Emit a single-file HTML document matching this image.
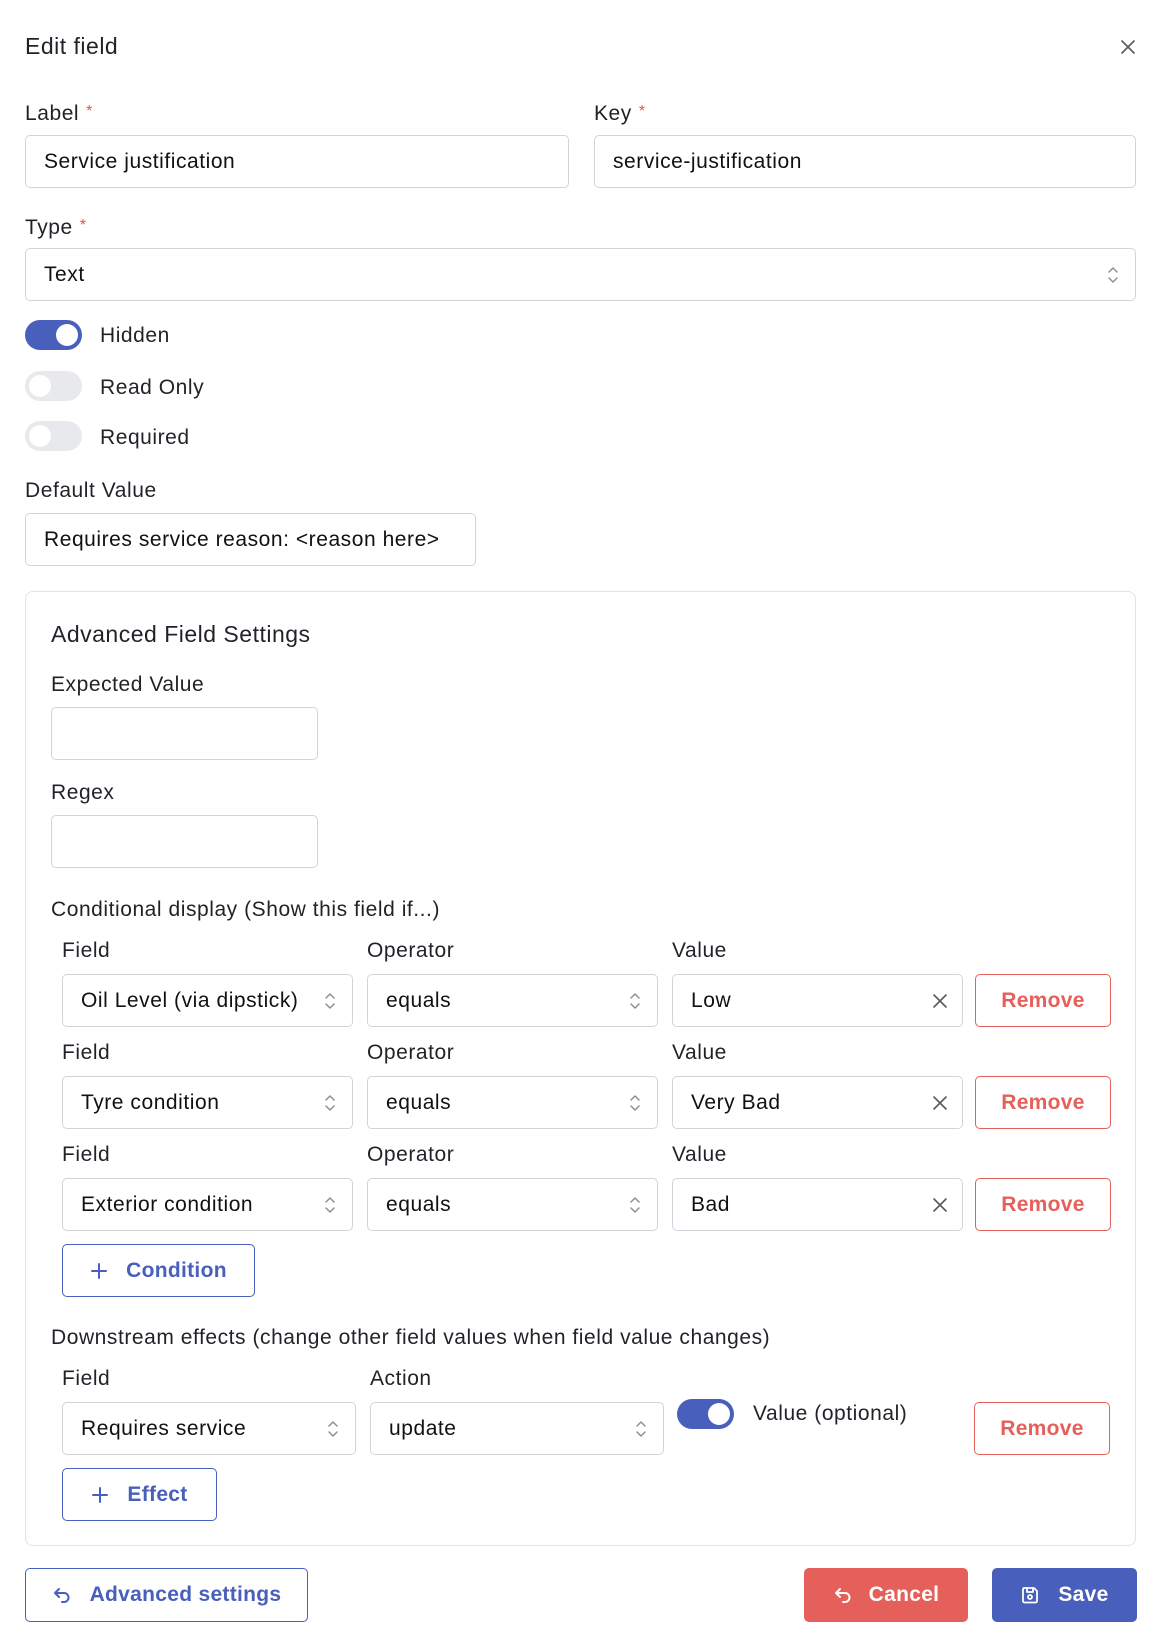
<!DOCTYPE html>
<html><head><meta charset="utf-8"><style>
*{box-sizing:border-box;margin:0;padding:0}
body{width:1160px;height:1650px;background:#fff;font-family:"Liberation Sans",Arial,sans-serif;color:#1f2328;position:relative;overflow:hidden;font-size:21px;letter-spacing:0.55px}
.a{position:absolute}
.t{position:absolute;line-height:24px;white-space:nowrap}
.in{position:absolute;border:1px solid #d1d5db;border-radius:5px;background:#fff}
.in span{position:absolute;left:18px;top:50%;transform:translateY(-50%);white-space:nowrap;color:#111}
.chev{position:absolute;right:16px;top:50%;transform:translateY(-50%)}
.req{color:#e5534b;font-size:16px;vertical-align:4px;margin-left:7px}
.btn{position:absolute;border-radius:5px;display:flex;align-items:center;justify-content:center;font-size:21px;letter-spacing:0.3px;font-weight:bold}
.rm{border:1px solid #e5605a;color:#e5605a;font-weight:bold}
.ob{border:1px solid #485fbb;color:#485fbb}
.tg{position:absolute;width:57px;height:30px;border-radius:15px}
.tg i{position:absolute;top:4px;width:22px;height:22px;border-radius:50%;background:#fff}
.clr{position:absolute;right:14px;top:50%;transform:translateY(-50%)}
</style></head><body>
<svg width="0" height="0" style="position:absolute"><defs>
<symbol id="ch" viewBox="0 0 12 22"><path d="M2 8 L6 4 L10 8 M2 14 L6 18 L10 14" fill="none" stroke="#8a8f98" stroke-width="1.5" stroke-linecap="round" stroke-linejoin="round"/></symbol>
<symbol id="x" viewBox="0 0 16 16"><path d="M2 2 L14 14 M14 2 L2 14" stroke="#555a61" stroke-width="1.6" stroke-linecap="round"/></symbol>
<symbol id="pl" viewBox="0 0 18 18"><path d="M9 2 V16 M2 9 H16" stroke="#485fbb" stroke-width="2" stroke-linecap="round"/></symbol>
<symbol id="bk" viewBox="0 0 20 20"><path d="M7 4 L3 8 L7 12 M3 8 H12 A4.5 4.5 0 0 1 12 17 H10" fill="none" stroke="currentColor" stroke-width="2" stroke-linecap="round" stroke-linejoin="round"/></symbol>
</defs></svg>

<div class="t" style="left:25px;top:34px;font-size:23px;letter-spacing:0.5px">Edit field</div>
<svg class="a" style="left:1120px;top:39px" width="16" height="16"><use href="#x"/></svg>

<div class="t" style="left:25px;top:100px">Label<span class="req">*</span></div>
<div class="t" style="left:594px;top:100px">Key<span class="req">*</span></div>
<div class="in" style="left:25px;top:135px;width:544px;height:53px"><span>Service justification</span></div>
<div class="in" style="left:594px;top:135px;width:542px;height:53px"><span>service-justification</span></div>

<div class="t" style="left:25px;top:214px">Type<span class="req">*</span></div>
<div class="in" style="left:25px;top:248px;width:1111px;height:53px"><span>Text</span><svg class="chev" width="12" height="22"><use href="#ch"/></svg></div>

<div class="tg" style="left:25px;top:320px;background:#485fbb"><i style="left:31px"></i></div>
<div class="t" style="left:100px;top:324px">Hidden</div>
<div class="tg" style="left:25px;top:371px;background:#e8e9ec"><i style="left:4px"></i></div>
<div class="t" style="left:100px;top:376px">Read Only</div>
<div class="tg" style="left:25px;top:421px;background:#e8e9ec"><i style="left:4px"></i></div>
<div class="t" style="left:100px;top:426px">Required</div>

<div class="t" style="left:25px;top:479px">Default Value</div>
<div class="in" style="left:25px;top:513px;width:451px;height:53px"><span>Requires service reason: &lt;reason here&gt;</span></div>

<div class="a" style="left:25px;top:591px;width:1111px;height:955px;border:1px solid #e1e3e6;border-radius:8px"></div>
<div class="t" style="left:51px;top:622px;font-size:23px;letter-spacing:0.5px">Advanced Field Settings</div>
<div class="t" style="left:51px;top:673px">Expected Value</div>
<div class="in" style="left:51px;top:707px;width:267px;height:53px"></div>
<div class="t" style="left:51px;top:781px">Regex</div>
<div class="in" style="left:51px;top:815px;width:267px;height:53px"></div>
<div class="t" style="left:51px;top:898px">Conditional display (Show this field if...)</div>

<div class="t" style="left:62px;top:939px">Field</div><div class="t" style="left:367px;top:939px">Operator</div><div class="t" style="left:672px;top:939px">Value</div>
<div class="in" style="left:62px;top:974px;width:291px;height:53px"><span>Oil Level (via dipstick)</span><svg class="chev" width="12" height="22"><use href="#ch"/></svg></div>
<div class="in" style="left:367px;top:974px;width:291px;height:53px"><span>equals</span><svg class="chev" width="12" height="22"><use href="#ch"/></svg></div>
<div class="in" style="left:672px;top:974px;width:291px;height:53px"><span>Low</span><svg class="clr" width="16" height="16"><use href="#x"/></svg></div>
<div class="btn rm" style="left:975px;top:974px;width:136px;height:53px">Remove</div>

<div class="t" style="left:62px;top:1041px">Field</div><div class="t" style="left:367px;top:1041px">Operator</div><div class="t" style="left:672px;top:1041px">Value</div>
<div class="in" style="left:62px;top:1076px;width:291px;height:53px"><span>Tyre condition</span><svg class="chev" width="12" height="22"><use href="#ch"/></svg></div>
<div class="in" style="left:367px;top:1076px;width:291px;height:53px"><span>equals</span><svg class="chev" width="12" height="22"><use href="#ch"/></svg></div>
<div class="in" style="left:672px;top:1076px;width:291px;height:53px"><span>Very Bad</span><svg class="clr" width="16" height="16"><use href="#x"/></svg></div>
<div class="btn rm" style="left:975px;top:1076px;width:136px;height:53px">Remove</div>

<div class="t" style="left:62px;top:1143px">Field</div><div class="t" style="left:367px;top:1143px">Operator</div><div class="t" style="left:672px;top:1143px">Value</div>
<div class="in" style="left:62px;top:1178px;width:291px;height:53px"><span>Exterior condition</span><svg class="chev" width="12" height="22"><use href="#ch"/></svg></div>
<div class="in" style="left:367px;top:1178px;width:291px;height:53px"><span>equals</span><svg class="chev" width="12" height="22"><use href="#ch"/></svg></div>
<div class="in" style="left:672px;top:1178px;width:291px;height:53px"><span>Bad</span><svg class="clr" width="16" height="16"><use href="#x"/></svg></div>
<div class="btn rm" style="left:975px;top:1178px;width:136px;height:53px">Remove</div>

<div class="btn ob" style="left:62px;top:1244px;width:193px;height:53px"><svg width="18" height="18" style="margin-right:18px"><use href="#pl"/></svg>Condition</div>

<div class="t" style="left:51px;top:1326px">Downstream effects (change other field values when field value changes)</div>
<div class="t" style="left:62px;top:1367px">Field</div><div class="t" style="left:370px;top:1367px">Action</div>
<div class="in" style="left:62px;top:1402px;width:294px;height:53px"><span>Requires service</span><svg class="chev" width="12" height="22"><use href="#ch"/></svg></div>
<div class="in" style="left:370px;top:1402px;width:294px;height:53px"><span>update</span><svg class="chev" width="12" height="22"><use href="#ch"/></svg></div>
<div class="tg" style="left:677px;top:1399px;background:#485fbb"><i style="left:31px"></i></div>
<div class="t" style="left:753px;top:1402px">Value (optional)</div>
<div class="btn rm" style="left:974px;top:1402px;width:136px;height:53px">Remove</div>
<div class="btn ob" style="left:62px;top:1468px;width:155px;height:53px"><svg width="18" height="18" style="margin-right:18px"><use href="#pl"/></svg>Effect</div>

<div class="btn ob" style="left:25px;top:1568px;width:283px;height:54px"><svg width="20" height="20" style="margin-right:18px;color:#485fbb"><use href="#bk"/></svg>Advanced settings</div>
<div class="btn" style="left:804px;top:1568px;width:164px;height:54px;background:#e5605a;color:#fff"><svg width="20" height="20" style="margin-right:16px;color:#fff"><use href="#bk"/></svg>Cancel</div>
<div class="btn" style="left:992px;top:1568px;width:145px;height:54px;background:#485fbb;color:#fff"><svg width="20" height="20" viewBox="0 0 20 20" style="margin-right:18px"><path d="M4 3 H14 L17 6 V16 A1.5 1.5 0 0 1 15.5 17.5 H4.5 A1.5 1.5 0 0 1 3 16 V4.5 A1.5 1.5 0 0 1 4 3 Z M7 3 V7 H13 V3" fill="none" stroke="#fff" stroke-width="1.8" stroke-linejoin="round"/><circle cx="10" cy="12" r="2" fill="none" stroke="#fff" stroke-width="1.8"/></svg>Save</div>
</body></html>
